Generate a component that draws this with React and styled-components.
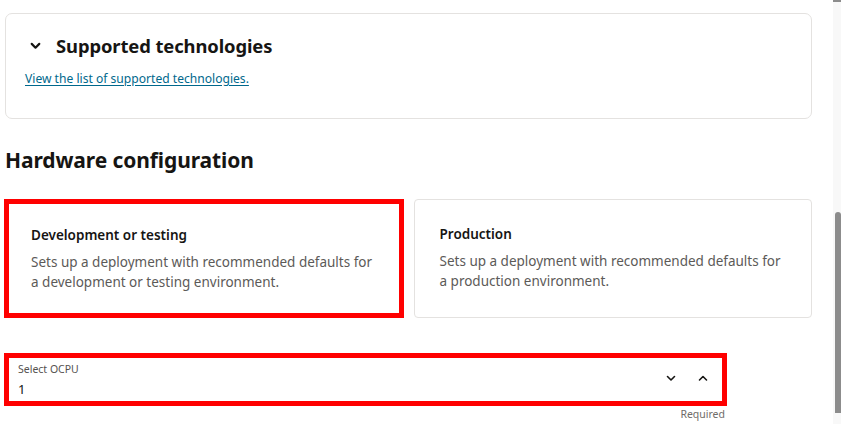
import React from 'react'
import styled, { createGlobalStyle } from 'styled-components'

const Global = createGlobalStyle`
  html, body {
    margin: 0;
    padding: 0;
    background: #ffffff;
    overflow: hidden;
  }
  body {
    font-family: "Noto Sans", "Open Sans", sans-serif;
    color: #161513;
  }
`;

const Page = styled.div`
  width: 841px;
  height: 424px;
  display: flex;
  overflow: hidden;
`;

const Content = styled.div`
  flex: 1;
  padding: 13px 21px 0 5px;
  display: flex;
  flex-direction: column;
`;

const Rail = styled.div`
  width: 8px;
  background: #f8f8f8;
  display: flex;
  flex-direction: column;
  align-items: flex-end;
`;

const RailCap = styled.div`
  width: 8px;
  height: 2px;
  background: #8c8c8c;
`;

const Thumb = styled.div`
  width: 6px;
  height: 201px;
  margin-top: 210px;
  background: #8c8c8c;
  border-radius: 3px 3px 0 0;
`;

const Panel = styled.section`
  box-sizing: border-box;
  height: 106px;
  border: 1px solid #e4e2e0;
  border-radius: 7px;
  padding: 18px 20px 0 19px;
`;

const PanelHeader = styled.div`
  display: flex;
  align-items: center;
  gap: 14px;
  height: 26px;
  padding-left: 4px;
`;

const PanelTitle = styled.h3`
  margin: 0;
  font-size: 18.4px;
  font-weight: 700;
  letter-spacing: -0.1px;
`;

const Link = styled.a`
  display: inline-block;
  margin-top: 12px;
  font-size: 12.1px;
  color: #00688c;
  text-decoration: underline;
  text-underline-offset: 2px;
`;

const SectionTitle = styled.h2`
  margin: 27px 0 0;
  font-size: 21px;
  font-weight: 700;
  line-height: 28px;
  letter-spacing: -0.1px;
`;

const Options = styled.div`
  display: grid;
  grid-template-columns: 1fr 1fr;
  gap: 10px;
  margin-top: 25px;
`;

const Option = styled.div`
  box-sizing: border-box;
  height: 119px;
  border: ${p => (p.$marked ? '5px solid #ff0000' : '1px solid #e4e2e0')};
  border-radius: ${p => (p.$marked ? '0' : '4px')};
  padding: ${p => (p.$marked ? '21px 22px' : '24px 25px')};
  margin-left: ${p => (p.$marked ? '-1px' : '0')};
`;

const OptionTitle = styled.div`
  font-size: 13.5px;
  font-weight: 600;
  line-height: 20px;
`;

const OptionText = styled.p`
  margin: 7px 0 0;
  font-size: 13.5px;
  line-height: 20px;
  color: #5c5a58;
`;

const Field = styled.div`
  width: 723px;
  margin: 35px 0 0 -1px;
  display: flex;
  flex-direction: column;
  align-items: flex-end;
`;

const SelectBox = styled.div`
  box-sizing: border-box;
  width: 100%;
  height: 53px;
  border: 5px solid #ff0000;
  display: flex;
  align-items: center;
  padding: 0 13px 0 9px;
`;

const SelectText = styled.div`
  flex: 1;
  display: flex;
  flex-direction: column;
  margin-top: 2px;
`;

const Label = styled.span`
  font-size: 10.5px;
  line-height: 14px;
  color: #55524f;
`;

const Value = styled.span`
  font-size: 13px;
  line-height: 20px;
  margin-top: 3px;
  color: #161513;
`;

const Steppers = styled.div`
  display: flex;
  gap: 20px;
  margin-top: -4px;
`;

const Helper = styled.span`
  font-size: 10.5px;
  line-height: 14px;
  color: #6f6c69;
  margin-top: 1px;
  margin-right: 2px;
`;

function Chevron({ up, size = 12, stroke = 1.6 }) {
  return (
    <svg width={size} height={size} viewBox="0 0 12 12" fill="none">
      <path
        d={up ? 'M2.5 8 L6 4.5 L9.5 8' : 'M2.5 4.5 L6 8 L9.5 4.5'}
        stroke="#161513"
        strokeWidth={stroke}
        strokeLinecap="round"
        strokeLinejoin="round"
      />
    </svg>
  );
}

export default function App() {
  return (
    <Page>
      <Global />
      <Content>
        <Panel>
          <PanelHeader>
            <Chevron size={13} stroke={2} />
            <PanelTitle>Supported technologies</PanelTitle>
          </PanelHeader>
          <Link href="#">View the list of supported technologies.</Link>
        </Panel>

        <SectionTitle>Hardware configuration</SectionTitle>

        <Options>
          <Option $marked>
            <OptionTitle>Development or testing</OptionTitle>
            <OptionText>
              Sets up a deployment with recommended defaults for a development or testing environment.
            </OptionText>
          </Option>
          <Option>
            <OptionTitle>Production</OptionTitle>
            <OptionText>
              Sets up a deployment with recommended defaults for a production environment.
            </OptionText>
          </Option>
        </Options>

        <Field>
          <SelectBox>
            <SelectText>
              <Label>Select OCPU</Label>
              <Value>1</Value>
            </SelectText>
            <Steppers>
              <Chevron />
              <Chevron up />
            </Steppers>
          </SelectBox>
          <Helper>Required</Helper>
        </Field>
      </Content>
      <Rail>
        <RailCap />
        <Thumb />
      </Rail>
    </Page>
  );
}
